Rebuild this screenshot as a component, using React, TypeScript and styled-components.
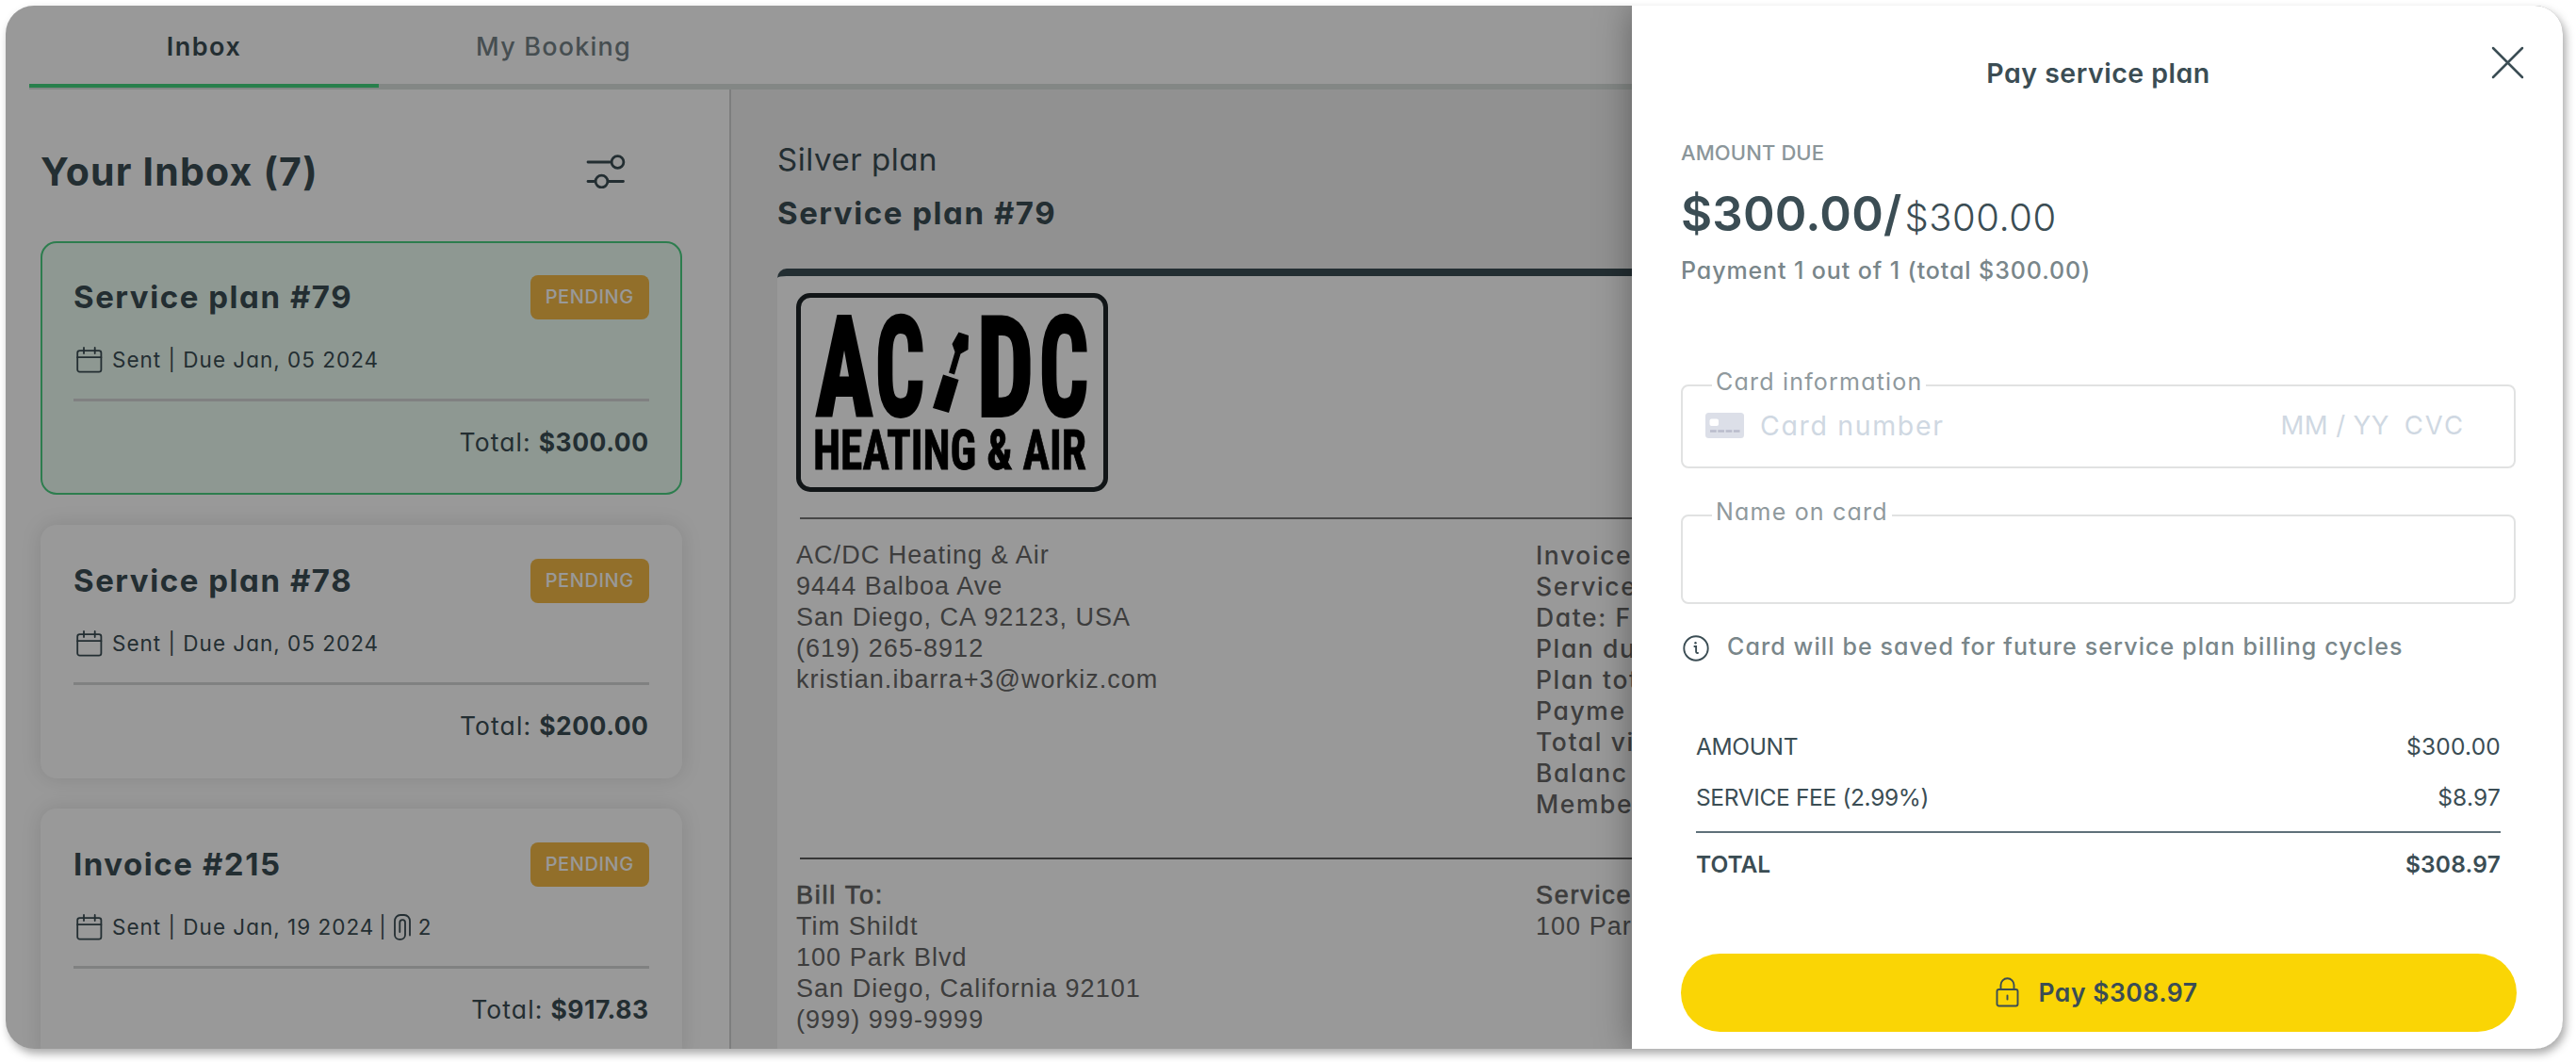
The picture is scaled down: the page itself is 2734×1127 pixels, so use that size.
import React from "react";
import styled, { createGlobalStyle, css } from "styled-components";

const ink = "#3b4d54";
const muted = "#79868a";

const GlobalStyle = createGlobalStyle`
  * { box-sizing: border-box; }
  body {
    margin: 0;
    background: #fff;
    color: ${ink};
    font-family: Inter, "Open Sans", sans-serif;
    font-feature-settings: "cv11";
  }
`;

const Shell = styled.div`
  position: relative;
  width: 2714px;
  height: 1107px;
  margin: 6px 0 0 6px;
  border-radius: 30px;
  overflow: hidden;
  background: #fff;
`;

const Frame = styled.div`
  width: 2734px;
  height: 1127px;
  overflow: hidden;
  display: flow-root;
  & > ${Shell} {
    box-shadow: 3px 5px 10px rgba(0, 0, 0, 0.34);
  }
`;

const Page = styled.div`
  display: flex;
  flex-direction: column;
  height: 100%;
`;

/* Tabs */

const TabBar = styled.nav`
  display: flex;
  flex: none;
  height: 89px;
  margin-left: 25px;
  border-bottom: 6px solid #dbe1de;
`;

const Tab = styled.div<{ $active?: boolean }>`
  position: relative;
  width: 371px;
  text-align: center;
  line-height: 87px;
  font-size: 27px;
  letter-spacing: ${(p) => (p.$active ? 1.5 : 1.2)}px;
  font-weight: ${(p) => (p.$active ? 600 : 500)};
  color: ${(p) => (p.$active ? ink : "#768387")};
  ${(p) =>
    p.$active &&
    css`
      &::after {
        content: "";
        position: absolute;
        left: 0;
        right: 0;
        bottom: -4px;
        height: 4px;
        background: #44d47f;
      }
    `}
`;

const Body = styled.div`
  display: flex;
  flex: 1;
  min-height: 0;
`;

/* Inbox list */

const Sidebar = styled.aside`
  flex: none;
  width: 770px;
  padding: 0 50.5px 0 37px;
  border-right: 2px solid #d0d3d2;
  overflow: hidden;
`;

const InboxHeader = styled.header`
  display: flex;
  align-items: center;
  justify-content: space-between;
  height: 161px;
  padding: 13px 59px 0 0;
`;

const InboxTitle = styled.h1`
  margin: 0;
  font-size: 41px;
  font-weight: 700;
  letter-spacing: 1.2px;
`;

const Card = styled.article<{ $selected?: boolean }>`
  height: 268.5px;
  margin-bottom: 32.5px;
  padding: 35.5px 35px 0;
  border-radius: 17px;
  background: ${(p) => (p.$selected ? "#edfdf3" : "#fff")};
  box-shadow: ${(p) => (p.$selected ? "inset 0 0 0 2px #4bd183" : "0 0 22px rgba(0, 0, 0, 0.12)")};
`;

const CardTop = styled.div`
  display: flex;
  align-items: center;
  justify-content: space-between;
  height: 47px;
`;

const CardTitle = styled.h2`
  margin: 0;
  font-size: 33px;
  font-weight: 700;
  letter-spacing: 1.55px;
`;

const Badge = styled.span`
  width: 125.5px;
  height: 47px;
  border-radius: 8px;
  background: #f3b946;
  color: #fff;
  text-align: center;
  line-height: 47.5px;
  font-size: 20px;
  font-weight: 500;
  letter-spacing: 0.6px;
`;

const Meta = styled.div`
  display: flex;
  align-items: center;
  height: 84.5px;
  padding: 2px 0 0 3px;
  font-size: 22.5px;
  letter-spacing: 1px;
  svg { flex: none; }
`;

const MetaText = styled.span<{ $gap?: number }>`
  margin-left: ${(p) => p.$gap ?? 10}px;
  white-space: nowrap;
`;

const ClipIcon = styled.span`
  display: flex;
  margin-left: 7px;
`;

const CardRule = styled.div`
  height: 2.5px;
  background: #d6d8d7;
`;

const CardTotal = styled.div`
  display: flex;
  justify-content: flex-end;
  line-height: 86px;
  font-size: 26.5px;
  letter-spacing: 1.1px;
  b { margin-left: 8px; font-weight: 650; letter-spacing: 0.5px; }
`;

/* Plan document */

const Detail = styled.main`
  flex: 1;
  padding: 45.5px 0 0 49px;
  background: #f2f2f2;
  white-space: nowrap;
`;

const PlanName = styled.div`
  font-size: 33px;
  line-height: 57.5px;
  letter-spacing: 0.55px;
`;

const PlanNumber = styled.div`
  font-size: 33px;
  line-height: 57.5px;
  font-weight: 700;
  letter-spacing: 1.55px;
`;

const Document = styled.section`
  height: 900px;
  margin-top: 29px;
  padding: 18.5px 0 0 20px;
  border-top: 8.5px solid ${ink};
  border-radius: 10px 0 0 0;
  background: #fff;
  color: #676767;
`;

const LogoBox = styled.div`
  display: flex;
  width: 331px;
  height: 210.5px;
  border: 5px solid #1d2427;
  border-radius: 15px;
`;

const DocRule = styled.div<{ $top: number; $dark?: boolean }>`
  height: 2px;
  margin: ${(p) => p.$top}px 0 21.5px 4px;
  background: ${(p) => (p.$dark ? "#5c5c5c" : "#777")};
`;

const DocColumns = styled.div`
  display: grid;
  grid-template-columns: 785px 1fr;
`;

const Lines = styled.div`
  font: 27px/33px "Liberation Sans", Arial, sans-serif;
  letter-spacing: 1.04px;
`;

const Emphasis = styled.div`
  -webkit-text-stroke: 0.7px currentColor;
  letter-spacing: 1.75px;
`;

const Facts = styled.div`
  font-size: 26.5px;
  font-weight: 500;
  line-height: 33px;
  letter-spacing: 1.6px;
`;

/* Overlay and payment drawer */

const Scrim = styled.div`
  position: absolute;
  inset: 0;
  background: rgba(0, 0, 0, 0.4);
`;

const Drawer = styled.aside`
  position: absolute;
  top: 0;
  right: 0;
  bottom: 0;
  width: 988px;
  padding: 0 50px 0 52px;
  background: #fff;
  box-shadow: 0 0 36px rgba(0, 0, 0, 0.36);
`;

const DrawerTitle = styled.h2`
  height: 140.5px;
  margin: 0;
  text-align: center;
  line-height: 144px;
  font-size: 28.5px;
  font-weight: 600;
  letter-spacing: 0.5px;
`;

const Close = styled.button`
  position: absolute;
  top: 41px;
  right: 40px;
  display: flex;
  padding: 0;
  border: 0;
  background: none;
  color: ${ink};
`;

const DueLabel = styled.div`
  line-height: 30px;
  font-size: 22px;
  font-weight: 500;
  letter-spacing: 0.1px;
  color: #8b969a;
`;

const Price = styled.div`
  height: 60px;
  margin-top: 20px;
  line-height: 60px;
  font-size: 51px;
  font-weight: 600;
  letter-spacing: 0.2px;
  span { margin-left: 3px; font-size: 40px; font-weight: 300; letter-spacing: 0.5px; }
`;

const PaymentNote = styled.div`
  margin-top: 12.5px;
  line-height: 36px;
  font-size: 25px;
  font-weight: 500;
  letter-spacing: 0.9px;
  color: ${muted};
`;

const Field = styled.div<{ $top: number; $height: number }>`
  position: relative;
  display: flex;
  align-items: center;
  height: ${(p) => p.$height}px;
  margin-top: ${(p) => p.$top}px;
  padding: 0 52px 3px 24px;
  border: 2px solid #e1e2e2;
  border-radius: 8px;
  font-size: 27.5px;
  color: #cfd8e2;
`;

const FieldLabel = styled.label`
  position: absolute;
  top: -20px;
  left: 31px;
  padding: 0 4px;
  background: #fff;
  line-height: 30px;
  font-size: 25px;
  letter-spacing: 1.2px;
  color: #8f999d;
`;

const CardNumber = styled.span`
  flex: 1;
  margin-left: 17px;
  font-size: 28.5px;
  letter-spacing: 1.65px;
`;

const Expiry = styled.span`
  letter-spacing: 0.4px;
`;

const Cvc = styled.span`
  margin-left: 16px;
  letter-spacing: 2px;
`;

const SaveNote = styled.div`
  display: flex;
  align-items: center;
  height: 34px;
  margin-top: 28px;
  padding-left: 2px;
  font-size: 25px;
  font-weight: 500;
  letter-spacing: 1.1px;
  white-space: nowrap;
  color: ${muted};
  svg { margin: 4px 19px 0 0; color: ${ink}; }
`;

const Summary = styled.div`
  margin: 63px 16px 0;
`;

const SummaryRow = styled.div<{ $total?: boolean }>`
  display: flex;
  justify-content: space-between;
  line-height: ${(p) => (p.$total ? 67 : 53.5)}px;
  font-size: 24.5px;
  font-weight: ${(p) => (p.$total ? 600 : 400)};
  letter-spacing: ${(p) => (p.$total ? 0 : -0.35)}px;
  ${(p) =>
    p.$total &&
    css`
      margin-top: 9px;
      border-top: 2px solid #5f717a;
    `}
  span + span { letter-spacing: 0.2px; }
`;

const PayButton = styled.button`
  display: flex;
  align-items: center;
  justify-content: center;
  width: 887px;
  height: 83px;
  margin-top: 60.5px;
  padding: 0 4px 0 0;
  border: 0;
  border-radius: 42px;
  background: #fad505;
  color: ${ink};
  font: 600 26.5px Inter, sans-serif;
  font-feature-settings: "cv11";
  letter-spacing: 0.5px;
  svg { margin-right: 20px; }
`;

/* Icons */

const FilterIcon = () => (
  <svg width="44" height="36" viewBox="0 0 44 36" fill="none" stroke="currentColor" strokeWidth="2.8" strokeLinecap="round">
    <path d="M3 8h23.5M3 28.5h6.5M24.5 28.5h16" />
    <circle cx="34.5" cy="8" r="6.4" />
    <circle cx="17.5" cy="28.5" r="6.4" />
  </svg>
);

const CalendarIcon = () => (
  <svg width="28" height="28" viewBox="0 0 28 28" fill="none" stroke="currentColor" strokeWidth="1.8" strokeLinecap="round">
    <rect x="1.2" y="4.2" width="25.2" height="22.4" rx="2.4" />
    <path d="M1.2 11.2h25.2M8 1v6M19.7 1v6" />
  </svg>
);

const PaperclipIcon = () => (
  <svg width="18" height="28" viewBox="0 0 18 28" fill="none" stroke="currentColor" strokeWidth="1.8" strokeLinecap="round">
    <path d="M17 22.5V7.5C17 4 14.5 1 11 1H7C3.5 1 1 4 1 7.5V22c0 2.8 2 4.8 4.8 4.8h1.4c2.8 0 4.8-2 4.8-4.8V9c0-1.7-1.2-2.8-2.7-2.8S6.3 7.3 6.3 9v10" />
  </svg>
);

const CloseIcon = () => (
  <svg width="38" height="38" viewBox="0 0 38 38" fill="none" stroke="currentColor" strokeWidth="2.5" strokeLinecap="round">
    <path d="M4 4l31 31M35 4L4 35" />
  </svg>
);

const CardIcon = () => (
  <svg width="41" height="27" viewBox="0 0 41 27">
    <rect width="41" height="27" rx="3.5" fill="#dcdfe8" />
    <rect x="4.5" y="6.5" width="9.5" height="7.5" rx="2" fill="#fff" />
    <path d="M5 19.5h31.5" stroke="#b9bccb" strokeWidth="2.6" strokeDasharray="6.7 1.6" />
  </svg>
);

const InfoIcon = () => (
  <svg width="28" height="28" viewBox="0 0 28 28" fill="none" stroke="currentColor" strokeWidth="1.9" strokeLinecap="round">
    <circle cx="14" cy="14" r="12.7" />
    <path d="M12.4 12h1.7v5.6c0 1 .7 1.6 1.9 1.4" />
    <circle cx="13.5" cy="8.3" r="1.2" fill="currentColor" stroke="none" />
  </svg>
);

const LockIcon = () => (
  <svg width="25" height="32" viewBox="0 0 25 32" fill="none" stroke="currentColor" strokeWidth="1.9" strokeLinecap="round">
    <rect x="1.5" y="13" width="22" height="17.5" rx="2" />
    <path d="M5.5 13V8.3a7 7 0 0 1 14 0V13M12.5 19.5v4" />
  </svg>
);

const Logo = () => (
  <svg width="321" height="200" viewBox="850 317 321 200" fill="#000">
    <g fontFamily="Roboto Condensed, sans-serif" fontWeight="700" fontSize="146" stroke="#000" strokeWidth="4" strokeLinejoin="miter">
      <text x="866" y="442" textLength="60" lengthAdjust="spacingAndGlyphs">A</text>
      <text x="929" y="442" textLength="52" lengthAdjust="spacingAndGlyphs">C</text>
      <text x="1037" y="442" textLength="60" lengthAdjust="spacingAndGlyphs">D</text>
      <text x="1103" y="442" textLength="52" lengthAdjust="spacingAndGlyphs">C</text>
    </g>
    <path d="M1017.5 353.5l10.5 3.5-.5 15-8 4.5-6.5 22-6-2 6.500-22-3-8.500zM1001 398.500l16.500 5.500-10.500 35-17-5z" />
    <text x="863" y="499" fontFamily="Roboto Condensed, sans-serif" fontWeight="700" fontSize="58.5" textLength="290" lengthAdjust="spacingAndGlyphs" stroke="#000" strokeWidth="0.8">
      HEATING &amp; AIR
    </text>
  </svg>
);

interface InboxItem {
  title: string;
  due: string;
  total: string;
  files?: number;
}

const inbox: InboxItem[] = [
  { title: "Service plan #79", due: "Sent | Due Jan, 05 2024", total: "$300.00" },
  { title: "Service plan #78", due: "Sent | Due Jan, 05 2024", total: "$200.00" },
  { title: "Invoice #215", due: "Sent | Due Jan, 19 2024", total: "$917.83", files: 2 },
];

const company = ["AC/DC Heating & Air", "9444 Balboa Ave", "San Diego, CA 92123, USA", "(619) 265-8912", "kristian.ibarra+3@workiz.com"];
const facts = ["Invoice", "Service", "Date: F", "Plan du", "Plan tot", "Payme", "Total vi", "Balanc", "Membe"];
const client = ["Tim Shildt", "100 Park Blvd", "San Diego, California 92101", "(999) 999-9999"];

export default function App() {
  return (
    <>
      <GlobalStyle />
      <Frame>
        <Shell>
          <Page>
            <TabBar>
              <Tab $active>Inbox</Tab>
              <Tab>My Booking</Tab>
            </TabBar>
            <Body>
              <Sidebar>
                <InboxHeader>
                  <InboxTitle>Your Inbox (7)</InboxTitle>
                  <FilterIcon />
                </InboxHeader>
                {inbox.map((item, i) => (
                  <Card key={item.title} $selected={i === 0}>
                    <CardTop>
                      <CardTitle>{item.title}</CardTitle>
                      <Badge>PENDING</Badge>
                    </CardTop>
                    <Meta>
                      <CalendarIcon />
                      <MetaText>{item.due}</MetaText>
                      {item.files && (
                        <>
                          <MetaText $gap={5}>|</MetaText>
                          <ClipIcon>
                            <PaperclipIcon />
                          </ClipIcon>
                          <MetaText $gap={8}>{item.files}</MetaText>
                        </>
                      )}
                    </Meta>
                    <CardRule />
                    <CardTotal>
                      Total: <b>{item.total}</b>
                    </CardTotal>
                  </Card>
                ))}
              </Sidebar>
              <Detail>
                <PlanName>Silver plan</PlanName>
                <PlanNumber>Service plan #79</PlanNumber>
                <Document>
                  <LogoBox>
                    <Logo />
                  </LogoBox>
                  <DocRule $top={27.5} />
                  <DocColumns>
                    <Lines>
                      {company.map((line) => (
                        <div key={line}>{line}</div>
                      ))}
                    </Lines>
                    <Facts>
                      {facts.map((line) => (
                        <div key={line}>{line}</div>
                      ))}
                    </Facts>
                  </DocColumns>
                  <DocRule $top={40.5} $dark />
                  <DocColumns>
                    <Lines>
                      <Emphasis>Bill To:</Emphasis>
                      {client.map((line) => (
                        <div key={line}>{line}</div>
                      ))}
                    </Lines>
                    <Lines>
                      <Emphasis>Service</Emphasis>
                      <div>100 Par</div>
                    </Lines>
                  </DocColumns>
                </Document>
              </Detail>
            </Body>
          </Page>
          <Scrim />
          <Drawer>
            <DrawerTitle>Pay service plan</DrawerTitle>
            <Close aria-label="Close">
              <CloseIcon />
            </Close>
            <DueLabel>AMOUNT DUE</DueLabel>
            <Price>
              $300.00/<span>$300.00</span>
            </Price>
            <PaymentNote>Payment 1 out of 1 (total $300.00)</PaymentNote>
            <Field $top={103} $height={89}>
              <FieldLabel>Card information</FieldLabel>
              <CardIcon />
              <CardNumber>Card number</CardNumber>
              <Expiry>MM / YY</Expiry>
              <Cvc>CVC</Cvc>
            </Field>
            <Field $top={49} $height={95}>
              <FieldLabel>Name on card</FieldLabel>
            </Field>
            <SaveNote>
              <InfoIcon />
              Card will be saved for future service plan billing cycles
            </SaveNote>
            <Summary>
              <SummaryRow>
                <span>AMOUNT</span>
                <span>$300.00</span>
              </SummaryRow>
              <SummaryRow>
                <span>SERVICE FEE (2.99%)</span>
                <span>$8.97</span>
              </SummaryRow>
              <SummaryRow $total>
                <span>TOTAL</span>
                <span>$308.97</span>
              </SummaryRow>
            </Summary>
            <PayButton>
              <LockIcon />
              Pay $308.97
            </PayButton>
          </Drawer>
        </Shell>
      </Frame>
    </>
  );
}
